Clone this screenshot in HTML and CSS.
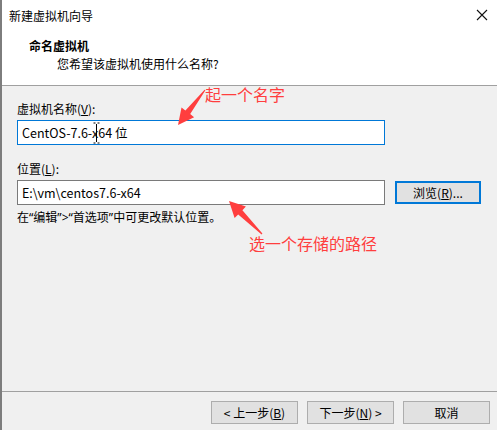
FILE: index.html
```html
<!DOCTYPE html>
<html lang="zh-CN">
<head>
    <meta charset="UTF-8">
    <title>新建虚拟机向导</title>
    <link rel="stylesheet" href="styles.css">
</head>
<body>
    <div class="window">
        <div class="titlebar">
            <span class="title">新建虚拟机向导</span>
            <svg class="close" width="12" height="12" viewBox="0 0 12 12">
                <path d="M1 1 L11 11 M11 1 L1 11" stroke="#111" stroke-width="1.1" fill="none"/>
            </svg>
        </div>
        <div class="header">
            <div class="header-title">命名虚拟机</div>
            <div class="header-sub">您希望该虚拟机使用什么名称?</div>
        </div>
        <div class="content">
            <div class="label">虚拟机名称(<u>V</u>):</div>
            <div class="field focused">CentOS-7.6-x64 位</div>

            <div class="label second">位置(<u>L</u>):</div>
            <div class="row">
                <div class="field">E:\vm\centos7.6-x64</div>
                <button class="btn browse">浏览(<u>R</u>)...</button>
            </div>
            <div class="hint">在<span class="q">“</span>编辑<span class="q">”&gt;“</span>首选项<span class="q">”</span>中可更改默认位置。</div>
        </div>
        <div class="footer">
            <button class="btn">&lt; 上一步(<u>B</u>)</button>
            <button class="btn">下一步(<u>N</u>) &gt;</button>
            <button class="btn">取消</button>
        </div>
    </div>

    <!-- red annotations drawn over the screenshot -->
    <div class="note note-name">起一个名字</div>
    <div class="note note-path">选一个存储的路径</div>
    <svg class="marks" width="498" height="430" viewBox="0 0 498 430">
        <polygon fill="#ff3e3e" points="205.4,90.3 190.2,114.1 194.1,117.2 178,125 181.5,107.4 185.4,110.5 204.6,89.7"/>
        <polygon fill="#ff3e3e" points="262.4,233.6 242.4,210.2 245.9,206.6 229,201 234.6,217.9 238.2,214.4 261.6,234.4"/>
        <path d="M93.5 123 H95.5 M97.5 123 H99.5 M96.5 124 V142 M93.5 143 H95.5 M97.5 143 H99.5" stroke="#000" stroke-width="1" fill="none"/>
    </svg>
</body>
</html>
```

FILE: styles.css
```css
body {
    margin: 0;
    background: #fff;
    font-family: "Noto Sans CJK SC", "Noto Sans", sans-serif;
    font-size: 12px;
    color: #000;
}

.window {
    width: 495px;
    height: 430px;
    border-left: 2px solid #7d7d7d;
    background: #f0f0f0;
    display: flex;
    flex-direction: column;
}

.titlebar {
    height: 30px;
    background: #fff;
    display: flex;
    align-items: center;
    justify-content: space-between;
    padding: 0 9px 0 7px;
}

.title {
    font-size: 12px;
}

.close {
    margin-top: -1px;
}

.header {
    height: 56px;
    background: #fff;
    border-bottom: 1px solid #a0a0a0;
    padding-left: 27px;
    box-sizing: border-box;
    padding-top: 7px;
}

.header-title {
    font-weight: bold;
    line-height: 18px;
}

.header-sub {
    padding-left: 28px;
    line-height: 18px;
}

.content {
    flex: 1;
    padding: 15px 0 0 15px;
    border-bottom: 1px solid #a0a0a0;
}

.label {
    line-height: 16px;
    margin-bottom: 3px;
}

.label.second {
    margin-top: 16px;
}

.field {
    width: 368px;
    height: 25px;
    box-sizing: border-box;
    border: 1px solid #7a7a7a;
    background: #fff;
    padding-left: 4px;
    line-height: 23px;
    font-size: 12.5px;
}

.field.focused {
    border-color: #0078d7;
}

.row {
    display: flex;
    align-items: center;
}

.btn {
    font-family: inherit;
    font-size: 12px;
    height: 23px;
    box-sizing: border-box;
    background: #e1e1e1;
    border: 1px solid #adadad;
    padding: 0;
    color: #000;
}

.browse {
    width: 86px;
    margin-left: 10px;
    border: 2px solid #0078d7;
}

.hint {
    margin-top: 4px;
    line-height: 16px;
}

.hint .q {
    font-family: "Noto Sans", sans-serif;
}

.footer {
    height: 38px;
    display: flex;
    justify-content: flex-end;
    gap: 9px;
    padding: 9px 7px 0 0;
    box-sizing: border-box;
}

.footer .btn {
    width: 87px;
}

.note {
    position: absolute;
    color: #ff3e3e;
    font-size: 16px;
    line-height: 18px;
}

.note-name {
    left: 205px;
    top: 85px;
}

.note-path {
    left: 249px;
    top: 234px;
}

.marks {
    position: absolute;
    left: 0;
    top: 0;
    pointer-events: none;
}
```
